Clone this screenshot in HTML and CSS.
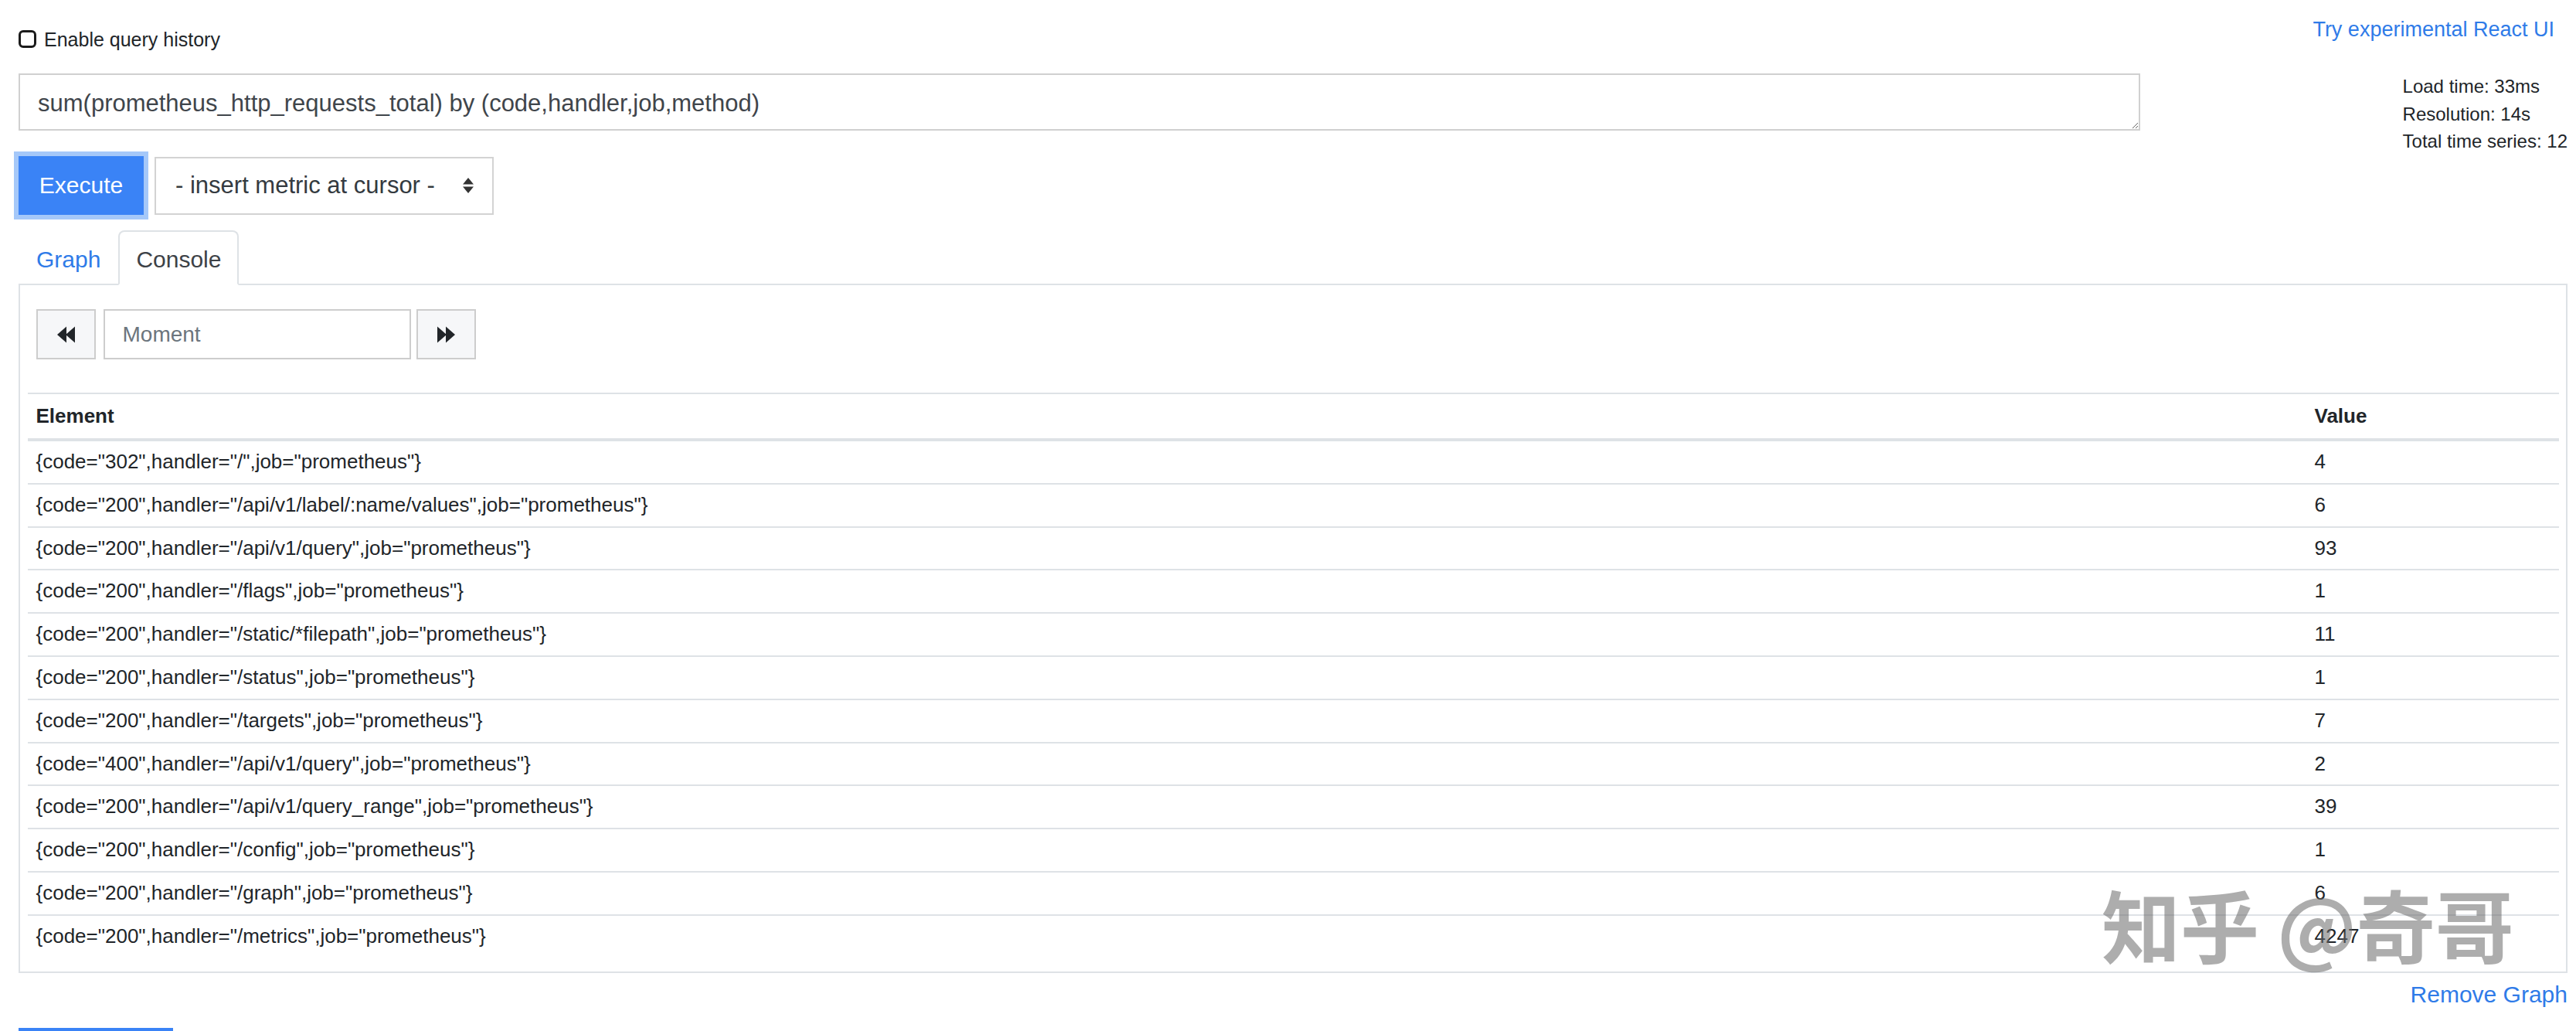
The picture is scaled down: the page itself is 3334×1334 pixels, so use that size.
FILE: index.html
```html
<!DOCTYPE html>
<html lang="en">
<head>
<meta charset="utf-8">
<title>Prometheus Time Series Collection and Processing Server</title>
<link rel="stylesheet" href="styles.css">
</head>
<body>
<div class="page">
  <div class="topbar">
    <label class="history"><input type="checkbox" class="history-box"><span class="history-text">Enable query history</span></label>
    <a class="react-link" href="#">Try experimental React UI</a>
  </div>

  <div class="query-row">
    <div class="query-main">
      <textarea class="expr" rows="1" spellcheck="false">sum(prometheus_http_requests_total) by (code,handler,job,method)</textarea>
      <div class="actions">
        <button class="btn-execute" type="button">Execute</button>
        <div class="metric-select">
          <span>- insert metric at cursor -</span>
          <svg class="select-arrows" width="16" height="20" viewBox="0 0 16 20"><polygon points="1,8.5 8,0 15,8.5" fill="#333"/><polygon points="1,11.5 8,20 15,11.5" fill="#333"/></svg>
        </div>
      </div>
    </div>
    <div class="stats">
      <div>Load time: 33ms</div>
      <div>Resolution: 14s</div>
      <div>Total time series: 12</div>
    </div>
  </div>

  <ul class="tabs">
    <li><a class="tab" href="#">Graph</a></li>
    <li><a class="tab active" href="#">Console</a></li>
  </ul>

  <div class="panel">
    <div class="moment">
      <button class="nav-btn" type="button" aria-label="Back">
        <svg width="23" height="22" viewBox="0 0 23 22"><polygon points="0,11 12,0.5 12,21.5" fill="#212529"/><polygon points="11,11 23,0.5 23,21.5" fill="#212529"/></svg>
      </button>
      <input class="moment-input" type="text" placeholder="Moment">
      <button class="nav-btn" type="button" aria-label="Forward">
        <svg width="23" height="22" viewBox="0 0 23 22"><polygon points="23,11 11,0.5 11,21.5" fill="#212529"/><polygon points="12,11 0,0.5 0,21.5" fill="#212529"/></svg>
      </button>
    </div>

    <table class="series">
      <thead>
        <tr><th>Element</th><th class="value">Value</th></tr>
      </thead>
      <tbody>
        <tr><td>{code="302",handler="/",job="prometheus"}</td><td>4</td></tr>
        <tr><td>{code="200",handler="/api/v1/label/:name/values",job="prometheus"}</td><td>6</td></tr>
        <tr><td>{code="200",handler="/api/v1/query",job="prometheus"}</td><td>93</td></tr>
        <tr><td>{code="200",handler="/flags",job="prometheus"}</td><td>1</td></tr>
        <tr><td>{code="200",handler="/static/*filepath",job="prometheus"}</td><td>11</td></tr>
        <tr><td>{code="200",handler="/status",job="prometheus"}</td><td>1</td></tr>
        <tr><td>{code="200",handler="/targets",job="prometheus"}</td><td>7</td></tr>
        <tr><td>{code="400",handler="/api/v1/query",job="prometheus"}</td><td>2</td></tr>
        <tr><td>{code="200",handler="/api/v1/query_range",job="prometheus"}</td><td>39</td></tr>
        <tr><td>{code="200",handler="/config",job="prometheus"}</td><td>1</td></tr>
        <tr><td>{code="200",handler="/graph",job="prometheus"}</td><td>6</td></tr>
        <tr><td>{code="200",handler="/metrics",job="prometheus"}</td><td>4247</td></tr>
      </tbody>
    </table>
  </div>

  <div class="remove-row"><a class="remove-link" href="#">Remove Graph</a></div>
  <button class="btn-add" type="button" aria-label="Add Graph"></button>
</div>
<div class="watermark">知乎 @奇哥</div>
</body>
</html>
```
FILE: styles.css
```css
* {
  box-sizing: border-box;
}

html {
  overflow: hidden;
}

body {
  margin: 0;
  background: #fff;
  color: #212529;
  font-family: "Liberation Sans", Arial, sans-serif;
}

.page {
  padding: 0 11px 0 24px;
}

/* top bar */
.topbar {
  display: flex;
  justify-content: space-between;
  align-items: flex-start;
  height: 94px;
}

.history {
  display: flex;
  align-items: center;
  gap: 10px;
  margin-top: 38.5px;
  height: 23px;
  font-size: 25px;
  line-height: 25px;
}

.history-box {
  appearance: none;
  -webkit-appearance: none;
  margin: 0;
  width: 23px;
  height: 23px;
  border: 3.5px solid #1b1b1b;
  border-radius: 6px;
  background: #fff;
}

.history-text {
  padding-top: 3px;
}

.react-link {
  margin: 22px 17px 0 0;
  font-size: 27px;
  line-height: 32px;
  color: #2f7be8;
  text-decoration: none;
}

/* query row */
.query-row {
  display: flex;
  align-items: flex-start;
}

.query-main {
  width: 2746px;
}

.expr {
  display: block;
  width: 100%;
  height: 74px;
  margin: 1px 0 0;
  padding: 14px 23px 0;
  border: 2px solid #d0d0d0;
  border-radius: 0;
  font-family: "Liberation Sans", Arial, sans-serif;
  font-size: 31px;
  line-height: 46px;
  color: #3f454b;
  resize: vertical;
  outline: none;
}

.actions {
  display: flex;
  align-items: center;
  gap: 14px;
  margin-top: 33px;
}

.btn-execute {
  width: 162px;
  height: 76px;
  padding: 0;
  border: none;
  border-radius: 0;
  background: #3a83f6;
  box-shadow: 0 0 0 6px #a5c8f9;
  color: #fff;
  font-family: "Liberation Sans", Arial, sans-serif;
  font-size: 30px;
}

.metric-select {
  display: flex;
  align-items: center;
  justify-content: space-between;
  width: 439px;
  height: 75px;
  padding: 0 23px 0 25px;
  border: 2px solid #d3d3d3;
  font-size: 31px;
  color: #343a40;
}

.select-arrows {
  display: block;
}

.stats {
  margin-left: auto;
  font-size: 24px;
  line-height: 35.7px;
}

/* tabs */
.tabs {
  display: flex;
  list-style: none;
  margin: 20px 0 0;
  padding: 0;
  border-bottom: 2px solid #dee2e6;
}

.tab {
  display: block;
  margin-bottom: -2px;
  padding: 13px 21px 9px;
  border: 2px solid transparent;
  border-radius: 8px 8px 0 0;
  font-size: 30px;
  line-height: 45px;
  color: #2f7be8;
  text-decoration: none;
}

.tab.active {
  background: #fff;
  border-color: #dee2e6 #dee2e6 #fff;
  color: #3d4247;
}

/* panel */
.panel {
  border: 2px solid #dee2e6;
  border-top: 0;
  padding: 31px 9px 18px 10px;
}

.moment {
  display: flex;
  height: 65px;
  margin-left: 11px;
}

.nav-btn {
  display: flex;
  align-items: center;
  justify-content: center;
  width: 77px;
  padding: 0;
  border: 2px solid #cdcdcd;
  border-radius: 0;
  background: #f6f7f9;
}

.moment-input {
  width: 398px;
  margin: 0 7.5px 0 9.5px;
  padding: 0 23px;
  border: 2px solid #cdcdcd;
  border-radius: 0;
  font-family: "Liberation Sans", Arial, sans-serif;
  font-size: 28px;
  color: #495057;
  outline: none;
}

.moment-input::placeholder {
  color: #6c757d;
}

.series {
  width: 100%;
  margin-top: 43px;
  border-collapse: collapse;
  font-size: 26px;
  line-height: 39.8px;
}

.series th,
.series td {
  padding: 7px 10.5px;
  border-top: 2px solid #dee2e6;
  text-align: left;
  vertical-align: top;
  white-space: nowrap;
}

.series th {
  padding: 8.6px 10.5px;
  border-bottom: 4px solid #dee2e6;
  font-weight: bold;
}

.series .value {
  width: 327px;
}

/* footer */
.remove-row {
  display: flex;
  justify-content: flex-end;
  margin-top: 5px;
}

.remove-link {
  font-size: 30px;
  line-height: 45px;
  color: #2f7be8;
  text-decoration: none;
}

.btn-add {
  display: block;
  width: 200px;
  height: 76px;
  margin-top: 21px;
  padding: 0;
  border: none;
  border-radius: 0;
  background: #3a83f6;
}

/* overlay watermark */
.watermark {
  position: absolute;
  left: 2720px;
  top: 1144px;
  font-family: "Noto Sans CJK SC", sans-serif;
  font-size: 102px;
  font-weight: 700;
  line-height: 102px;
  color: rgba(105, 105, 105, 0.55);
  white-space: nowrap;
  pointer-events: none;
}
```
